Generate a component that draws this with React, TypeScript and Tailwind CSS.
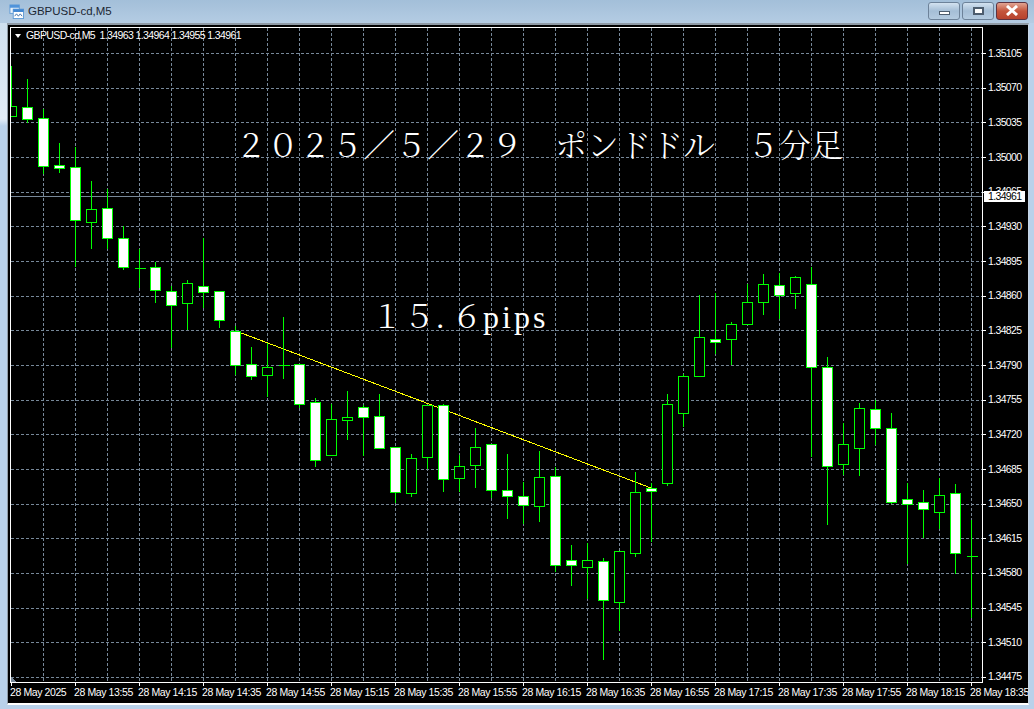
import React from 'react';

type Candle = [number, number, number, number, number]; // high, top, bottom, low, filled

const candles: Candle[] = [
  [66, 106, 116, 116, 0], [79, 107, 119, 122, 1], [109, 118, 166, 173, 1], [143, 165, 168, 172, 1],
  [147, 167, 220, 266, 1], [181, 209, 222, 248, 0], [189, 208, 238, 248, 1], [226, 238, 267, 269, 1],
  [249, 268, 268, 287, 1], [262, 267, 290, 302, 1], [286, 291, 305, 347, 1], [280, 283, 303, 329, 0],
  [238, 286, 292, 307, 1], [291, 291, 320, 327, 1], [326, 331, 365, 374, 1], [347, 364, 376, 379, 1],
  [343, 367, 375, 396, 0], [317, 365, 365, 378, 1], [364, 364, 404, 407, 1], [398, 402, 460, 466, 1],
  [404, 419, 455, 455, 0], [391, 417, 420, 439, 0], [405, 407, 417, 455, 1], [394, 416, 448, 448, 1],
  [447, 447, 492, 502, 1], [454, 458, 493, 496, 0], [405, 405, 457, 468, 0], [404, 405, 479, 491, 1],
  [455, 466, 478, 491, 0], [428, 447, 465, 487, 0], [444, 444, 490, 497, 1], [454, 490, 496, 518, 1],
  [482, 496, 505, 523, 1], [451, 477, 506, 521, 0], [467, 476, 565, 571, 1], [545, 560, 565, 585, 1],
  [543, 560, 567, 598, 0], [558, 561, 600, 659, 1], [551, 551, 602, 630, 0], [472, 492, 553, 556, 0],
  [483, 488, 491, 541, 1], [394, 404, 483, 485, 0], [374, 376, 413, 426, 0], [295, 337, 376, 376, 0],
  [293, 339, 342, 353, 1], [322, 324, 339, 364, 0], [284, 302, 324, 324, 0], [274, 284, 302, 314, 0],
  [273, 285, 295, 318, 1], [276, 277, 293, 308, 0], [267, 284, 367, 456, 1], [357, 367, 466, 524, 1],
  [423, 444, 464, 474, 0], [403, 408, 448, 475, 0], [400, 409, 428, 444, 1], [413, 428, 502, 503, 1],
  [483, 499, 504, 563, 1], [490, 502, 509, 537, 1], [478, 495, 512, 528, 0], [484, 493, 553, 573, 1],
  [520, 556, 556, 617, 1],
];

const prices = [
  '1.35105', '1.35070', '1.35035', '1.35000', '1.34965', '1.34930', '1.34895', '1.34860', '1.34825', '1.34790',
  '1.34755', '1.34720', '1.34685', '1.34650', '1.34615', '1.34580', '1.34545', '1.34510', '1.34475',
];

const times = [
  '28 May 2025', '28 May 13:55', '28 May 14:15', '28 May 14:35', '28 May 14:55', '28 May 15:15', '28 May 15:35',
  '28 May 15:55', '28 May 16:15', '28 May 16:35', '28 May 16:55', '28 May 17:15', '28 May 17:35', '28 May 17:55',
  '28 May 18:15', '28 May 18:35',
];

const gridX = Array.from({ length: 30 }, (_, i) => 43.5 + i * 32);
const gridY = prices.map((_, i) => Math.round(53 + i * 34.67) + 0.5);

const Chart = () => (
  <svg width={971} height={654} viewBox="11 28 971 654" className="block" shapeRendering="crispEdges">
    {gridX.map((x) => (
      <line key={x} x1={x} x2={x} y1={28} y2={682} stroke="#778899" strokeDasharray="3 2" />
    ))}
    {gridY.map((y) => (
      <line key={y} x1={11} x2={982} y1={y} y2={y} stroke="#778899" strokeDasharray="3 2" />
    ))}
    <line x1={11} x2={982} y1={196.5} y2={196.5} stroke="#778899" />
    <line x1={236} y1={331} x2={651} y2={488} stroke="#ffff00" />
    {candles.map(([high, top, bottom, low, filled], i) => {
      const x = 11.5 + i * 16;
      return (
        <g key={i} stroke="#00ff00">
          <line x1={x} x2={x} y1={high} y2={low + 1} />
          {top === bottom ? (
            <line x1={x - 5} x2={x + 6} y1={top + 0.5} y2={top + 0.5} />
          ) : (
            <rect x={x - 5} y={top + 0.5} width={10} height={bottom - top} fill={filled ? '#ffffff' : '#000000'} />
          )}
        </g>
      );
    })}
    <polygon points="11,677 16,682 11,682" fill="#778899" />
  </svg>
);

const WindowIcon = () => (
  <svg width="15" height="15" viewBox="0 0 16 16" className="ml-[2px] shrink-0">
    <rect x="1" y="1" width="10" height="9" fill="#e8f1fa" stroke="#5f9bd6" />
    <rect x="1" y="1" width="10" height="3" fill="#4f93da" />
    <rect x="4.5" y="5.5" width="11" height="10" fill="#ffffff" stroke="#5f9bd6" />
    <rect x="4.5" y="5.5" width="11" height="3" fill="#3f86d2" />
    <path d="M6 13 L8 10.5 L10 13 L12 10.5 L14 13" fill="none" stroke="#3c6ea8" strokeWidth="1" />
  </svg>
);

const App = () => {
  return (
    <div className="flex h-[709px] w-[1034px] flex-col overflow-hidden bg-[#b9d1ea] font-['Liberation_Sans',sans-serif]">
      <div className="flex h-[23px] shrink-0 items-center bg-gradient-to-b from-[#a3bfd9] to-[#b4cce3] pl-[7px] pr-[6px]">
        <WindowIcon />
        <span className="ml-[4px] text-[11.5px] text-[#1c2733]">GBPUSD-cd,M5</span>
        <div className="ml-auto flex -translate-y-[1px] gap-[2px]">
          <button className="flex h-[18px] w-[32px] items-center justify-center rounded-[3px] border border-[#6d8299] bg-gradient-to-b from-[#d3e2f0] via-[#a5bed6] to-[#b4cbe0]">
            <span className="mt-[4px] h-[4px] w-[11px] border border-[#4d5d6e] bg-white" />
          </button>
          <button className="flex h-[18px] w-[32px] items-center justify-center rounded-[3px] border border-[#6d8299] bg-gradient-to-b from-[#d3e2f0] via-[#a5bed6] to-[#b4cbe0]">
            <span className="h-[8px] w-[11px] border-2 border-[#4d5d6e] bg-white" />
          </button>
          <button className="flex h-[18px] w-[32px] items-center justify-center rounded-[3px] border border-[#5e3340] bg-gradient-to-b from-[#e0a493] via-[#c4553c] to-[#b8422d]">
            <svg width="14" height="11" viewBox="0 0 14 11">
              <path d="M2 1 L12 10 M12 1 L2 10" stroke="#ffffff" strokeWidth="3" fill="none" />
            </svg>
          </button>
        </div>
      </div>
      <div className="flex min-h-0 flex-1">
        <div className="w-[7px] shrink-0 bg-gradient-to-b from-[#cfe0ef] via-[#e2ecf6] via-[14%] to-[#b9d1ea] to-[15%]" />
        <div className="flex h-[682px] w-[1022px] flex-col overflow-hidden border-t-2 border-b-2 border-l border-r border-t-[#8f9aa5] border-b-white border-l-[#8f9aa5] border-r-[#c8d6e4] bg-black pt-[2px]">
          <div className="flex h-[656px] shrink-0 pl-[2px]">
            <div className="relative h-[656px] w-[973px] shrink-0 border border-white">
              <Chart />
              <div className="absolute left-[4px] top-[2px] flex h-[12px] items-center text-[10.5px] tracking-[-0.62px] text-white">
                <span className="mr-[5px] h-0 w-0 border-x-[3.5px] border-t-[4px] border-x-transparent border-t-white" />
                <span className="whitespace-pre">GBPUSD-cd,M5  1.34963 1.34964 1.34955 1.34961</span>
              </div>
              <div className="absolute left-[224px] top-[97px] whitespace-pre text-[32px] leading-[36px] text-white font-['Noto_Serif_CJK_JP','Noto_Sans_CJK_JP',serif] font-light">
                ２０２５／５／２９　ポンドドル　５分足
              </div>
              <div className="absolute left-[360px] top-[268px] whitespace-pre text-[32px] leading-[36px] text-white font-['Noto_Serif_CJK_JP','Noto_Sans_CJK_JP',serif] font-light">
                １５<span className="inline-block w-[16px]">.</span>６<span className="tracking-[3px] font-['Liberation_Serif',serif]">pips</span>
              </div>
            </div>
            <div className="relative h-[656px] flex-1 pt-[9.2px] text-[10.5px] tracking-[-0.65px] text-white">
              {prices.map((p) => (
                <div key={p} className="flex h-[34.67px] items-center">
                  <span className="mr-[2px] h-px w-[3px] bg-white" />
                  <span>{p}</span>
                </div>
              ))}
              <div className="absolute left-[1px] top-[164px] flex h-[11px] w-[41px] items-center bg-white pl-[4px] text-black">
                1.34961
              </div>
            </div>
          </div>
          <div className="flex pl-[2px] text-[10.5px] tracking-[-0.4px] text-white">
            {times.map((t) => (
              <div key={t} className="w-[64px] shrink-0">
                <div className="ml-[1px] h-[3px] w-px bg-white" />
                <div className="whitespace-nowrap leading-[13px]">{t}</div>
              </div>
            ))}
          </div>
        </div>
      </div>
    </div>
  );
};

export default App;
